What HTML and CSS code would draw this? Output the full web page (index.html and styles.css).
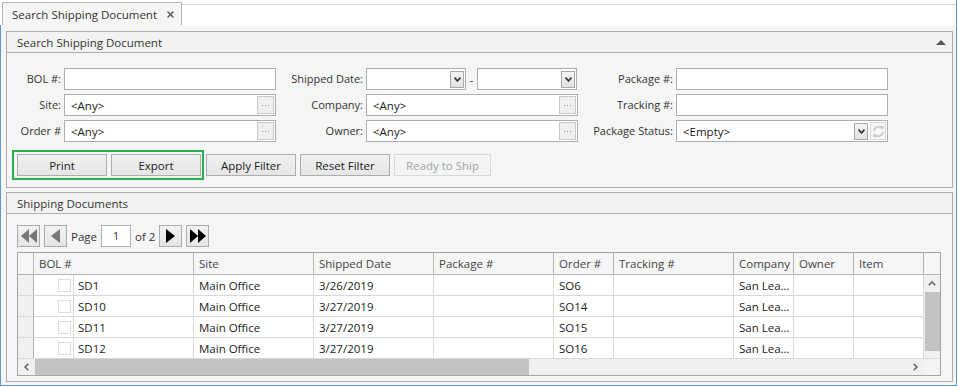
FILE: index.html
```html
<!DOCTYPE html>
<html>

<head>
    <title>Search Shipping Document</title>
    <meta name="viewport" content="width=device-width, initial-scale=1">
    <link rel="stylesheet" href="styles.css">
</head>

<body>
    <div class="window">
        <div class="tabstrip">
            <div class="tab">
                <span>Search Shipping Document</span>
                <svg class="tab-close" width="7" height="7" viewBox="0 0 7 7"><path d="M0.5 0.5 L6.5 6.5 M6.5 0.5 L0.5 6.5" stroke="#555" stroke-width="1.4"/></svg>
            </div>
            <div class="tab-fill"></div>
        </div>

        <div class="frame">
            <!-- search panel -->
            <section class="panel panel-search">
                <div class="panel-head">
                    <span>Search Shipping Document</span>
                    <svg width="10" height="5" viewBox="0 0 10 5"><polygon points="0,5 5,0 10,5" fill="#555"/></svg>
                </div>
                <div class="panel-body">
                    <div class="filters">
                        <div class="label">BOL #:</div>
                        <div class="input"></div>
                        <div class="label">Shipped Date:</div>
                        <div class="date-range">
                            <div class="input combo">
                                <span class="value"></span>
                                <span class="btn-drop"><svg width="7" height="5" viewBox="0 0 7 5"><path d="M0.6 0.6 L3.5 4 L6.4 0.6" fill="none" stroke="#333" stroke-width="1.6"/></svg></span>
                            </div>
                            <span class="dash">-</span>
                            <div class="input combo">
                                <span class="value"></span>
                                <span class="btn-drop"><svg width="7" height="5" viewBox="0 0 7 5"><path d="M0.6 0.6 L3.5 4 L6.4 0.6" fill="none" stroke="#333" stroke-width="1.6"/></svg></span>
                            </div>
                        </div>
                        <div class="label">Package #:</div>
                        <div class="input"></div>

                        <div class="label">Site:</div>
                        <div class="input lookup"><span class="value">&lt;Any&gt;</span><span class="btn-dots"><i></i><i></i><i></i></span></div>
                        <div class="label">Company:</div>
                        <div class="input lookup"><span class="value">&lt;Any&gt;</span><span class="btn-dots"><i></i><i></i><i></i></span></div>
                        <div class="label">Tracking #:</div>
                        <div class="input"></div>

                        <div class="label">Order #</div>
                        <div class="input lookup"><span class="value">&lt;Any&gt;</span><span class="btn-dots"><i></i><i></i><i></i></span></div>
                        <div class="label">Owner:</div>
                        <div class="input lookup"><span class="value">&lt;Any&gt;</span><span class="btn-dots"><i></i><i></i><i></i></span></div>
                        <div class="label">Package Status:</div>
                        <div class="input combo">
                            <span class="value">&lt;Empty&gt;</span>
                            <span class="btn-drop"><svg width="7" height="5" viewBox="0 0 7 5"><path d="M0.6 0.6 L3.5 4 L6.4 0.6" fill="none" stroke="#333" stroke-width="1.6"/></svg></span>
                            <span class="btn-refresh"><svg width="13" height="13" viewBox="0 0 13 13"><path d="M2 6 A4.5 4.5 0 0 1 10 3.5 M11 7 A4.5 4.5 0 0 1 3 9.5" fill="none" stroke="#c6c6c6" stroke-width="1.6"/><polygon points="8,1 11.5,1 11.5,4.8" fill="#c6c6c6"/><polygon points="5,12 1.5,12 1.5,8.2" fill="#c6c6c6"/></svg></span>
                        </div>
                    </div>

                    <div class="actions">
                        <div class="highlight">
                            <button class="btn">Print</button>
                            <button class="btn">Export</button>
                        </div>
                        <button class="btn">Apply Filter</button>
                        <button class="btn">Reset Filter</button>
                        <button class="btn btn-wide" disabled>Ready to Ship</button>
                    </div>
                </div>
            </section>

            <!-- results panel -->
            <section class="panel panel-results">
                <div class="panel-head">
                    <span>Shipping Documents</span>
                </div>
                <div class="panel-body">
                    <div class="pager">
                        <span class="pg-btn"><svg width="16" height="14" viewBox="0 0 16 14"><polygon points="8,0 8,14 0,7" fill="#777"/><polygon points="16,0 16,14 8,7" fill="#777"/></svg></span>
                        <span class="pg-btn"><svg width="9" height="14" viewBox="0 0 9 14"><polygon points="9,0 9,14 0,7" fill="#777"/></svg></span>
                        <span class="pg-text">Page</span>
                        <span class="pg-input">1</span>
                        <span class="pg-text">of 2</span>
                        <span class="pg-btn"><svg width="9" height="14" viewBox="0 0 9 14"><polygon points="0,0 0,14 9,7" fill="#000"/></svg></span>
                        <span class="pg-btn"><svg width="16" height="14" viewBox="0 0 16 14"><polygon points="0,0 0,14 8,7" fill="#000"/><polygon points="8,0 8,14 16,7" fill="#000"/></svg></span>
                    </div>

                    <div class="grid">
                        <div class="grid-row grid-head">
                            <div class="cell ind"></div>
                            <div class="cell">BOL #</div>
                            <div class="cell">Site</div>
                            <div class="cell">Shipped Date</div>
                            <div class="cell">Package #</div>
                            <div class="cell">Order #</div>
                            <div class="cell">Tracking #</div>
                            <div class="cell">Company</div>
                            <div class="cell">Owner</div>
                            <div class="cell">Item</div>
                            <div class="cell corner"></div>
                        </div>
                        <div class="grid-mid">
                            <div class="rows">
                                <div class="grid-row">
                                    <div class="cell ind"></div>
                                    <div class="cell bol"><span class="check"></span><span class="bol-text">SD1</span></div>
                                    <div class="cell">Main Office</div>
                                    <div class="cell">3/26/2019</div>
                                    <div class="cell"></div>
                                    <div class="cell">SO6</div>
                                    <div class="cell"></div>
                                    <div class="cell">San Lea…</div>
                                    <div class="cell"></div>
                                    <div class="cell"></div>
                                </div>
                                <div class="grid-row">
                                    <div class="cell ind"></div>
                                    <div class="cell bol"><span class="check"></span><span class="bol-text">SD10</span></div>
                                    <div class="cell">Main Office</div>
                                    <div class="cell">3/27/2019</div>
                                    <div class="cell"></div>
                                    <div class="cell">SO14</div>
                                    <div class="cell"></div>
                                    <div class="cell">San Lea…</div>
                                    <div class="cell"></div>
                                    <div class="cell"></div>
                                </div>
                                <div class="grid-row">
                                    <div class="cell ind"></div>
                                    <div class="cell bol"><span class="check"></span><span class="bol-text">SD11</span></div>
                                    <div class="cell">Main Office</div>
                                    <div class="cell">3/27/2019</div>
                                    <div class="cell"></div>
                                    <div class="cell">SO15</div>
                                    <div class="cell"></div>
                                    <div class="cell">San Lea…</div>
                                    <div class="cell"></div>
                                    <div class="cell"></div>
                                </div>
                                <div class="grid-row">
                                    <div class="cell ind"></div>
                                    <div class="cell bol"><span class="check"></span><span class="bol-text">SD12</span></div>
                                    <div class="cell">Main Office</div>
                                    <div class="cell">3/27/2019</div>
                                    <div class="cell"></div>
                                    <div class="cell">SO16</div>
                                    <div class="cell"></div>
                                    <div class="cell">San Lea…</div>
                                    <div class="cell"></div>
                                    <div class="cell"></div>
                                </div>
                            </div>
                            <div class="vscroll">
                                <span class="arrow"><svg width="8" height="5" viewBox="0 0 8 5"><path d="M0.7 4.3 L4 1 L7.3 4.3" fill="none" stroke="#606060" stroke-width="1.5"/></svg></span>
                                <span class="thumb"></span>
                            </div>
                        </div>
                        <div class="hscroll">
                            <div class="track">
                                <span class="arrow"><svg width="5" height="8" viewBox="0 0 5 8"><path d="M4.3 0.7 L1 4 L4.3 7.3" fill="none" stroke="#606060" stroke-width="1.5"/></svg></span>
                                <span class="thumb"></span>
                                <span class="arrow arrow-end"><svg width="5" height="8" viewBox="0 0 5 8"><path d="M0.7 0.7 L4 4 L0.7 7.3" fill="none" stroke="#606060" stroke-width="1.5"/></svg></span>
                            </div>
                            <div class="corner"></div>
                        </div>
                    </div>
                </div>
            </section>
        </div>
    </div>
</body>

</html>
```

FILE: styles.css
```css
:root {
    --frame-blue: #5b9bd5;
    --bg: #f5f5f5;
    --head-bg: #f2f2f2;
    --panel-border: #acacac;
    --input-border: #abadb3;
    --text: #333333;
    --grid-line: #d9d9d9;
    --grid-head-line: #b4b4b4;
    --scroll-bg: #f0f0f0;
    --scroll-thumb: #c2c2c2;
    --green: #26b04b;
}

* {
    box-sizing: border-box;
}

body {
    margin: 0;
    background-color: #ffffff;
    color: var(--text);
    font-family: "Open Sans", "Noto Sans", sans-serif;
    font-size: 11px;
}

.window {
    width: 957px;
    height: 386px;
    border-right: 1px solid var(--frame-blue);
    display: flex;
    flex-direction: column;
}

/* tab strip */
.tabstrip {
    height: 25px;
    display: flex;
    align-items: flex-end;
    flex-shrink: 0;
}

.tab {
    margin-left: 2px;
    height: 23px;
    width: 180px;
    display: flex;
    align-items: center;
    padding-left: 9px;
    border: 1px solid #b4b4b4;
    border-bottom: none;
    background-color: var(--bg);
    font-size: 11.5px;
}

.tab-close {
    margin-left: 10px;
}

.tab-fill {
    flex-grow: 1;
    align-self: stretch;
    margin-top: 4px;
    border-top: 1px solid #d6d6d6;
}

.frame {
    flex-grow: 1;
    background-color: var(--bg);
    border-left: 1px solid var(--frame-blue);
    border-bottom: 1px solid var(--frame-blue);
    padding: 6px 3px 3px 5px;
    display: flex;
    flex-direction: column;
    gap: 4px;
}

/* panels */
.panel {
    width: 947px;
    border: 1px solid var(--panel-border);
    background-color: var(--bg);
}

.panel-search {
    height: 157px;
}

.panel-results {
    height: 190px;
}

.panel-head {
    height: 21px;
    display: flex;
    align-items: center;
    justify-content: space-between;
    padding: 0 6px 0 10px;
    background-color: var(--head-bg);
    border-bottom: 1px solid var(--panel-border);
    font-size: 11.5px;
}

.panel-search .panel-body {
    padding: 15px 0 0 3px;
}

.filters {
    display: grid;
    grid-template-columns: 54px 212px 90px 212px 98px 212px;
    grid-auto-rows: 22px;
    row-gap: 4px;
}

.label {
    text-align: right;
    padding-right: 3px;
    line-height: 22px;
    white-space: nowrap;
}

.input {
    height: 22px;
    border: 1px solid var(--input-border);
    background-color: #ffffff;
    display: flex;
    align-items: center;
}

.input .value {
    flex-grow: 1;
    padding-left: 6px;
    font-size: 11.5px;
    color: #222;
}

.date-range {
    display: flex;
    align-items: center;
}

.date-range .input {
    width: 100px;
}

.dash {
    width: 11px;
    text-align: center;
}

.btn-drop {
    width: 14px;
    height: 17px;
    margin-right: 1px;
    border: 1px solid #a8a8a8;
    background: linear-gradient(#f4f4f4, #e2e2e2);
    display: flex;
    align-items: center;
    justify-content: center;
}

.btn-dots {
    width: 17px;
    height: 18px;
    margin-right: 1px;
    border: 1px solid #c8c8c8;
    background-color: #efefef;
    display: flex;
    align-items: center;
    justify-content: center;
    gap: 2px;
}

.btn-dots i {
    width: 1px;
    height: 1px;
    background-color: #8a8a8a;
}

.btn-refresh {
    width: 16px;
    height: 18px;
    margin-left: 1px;
    margin-right: 1px;
    border: 1px solid #d8d8d8;
    background-color: #f6f6f6;
    display: flex;
    align-items: center;
    justify-content: center;
}

/* action buttons */
.actions {
    margin: 8px 0 0 2px;
    height: 30px;
    display: flex;
    align-items: center;
    gap: 4px;
}

.highlight {
    display: flex;
    gap: 4px;
    border: 2px solid var(--green);
    padding: 2px 1px 2px 3px;
    margin-right: -2px;
}

.btn {
    width: 90px;
    height: 22px;
    padding: 0;
    border: 1px solid #acacac;
    background: linear-gradient(#f0f0f0, #e5e5e5);
    color: #222;
    font-family: inherit;
    font-size: 11.5px;
}

.btn-wide {
    width: 97px;
}

.btn:disabled {
    background: #f4f4f4;
    border-color: #d9d9d9;
    color: #a2a2a2;
}

/* results */
.panel-results .panel-body {
    padding: 11px 11px 5px 10px;
}

.pager {
    height: 22px;
    display: flex;
    align-items: center;
    gap: 4px;
}

.pg-btn {
    width: 23px;
    height: 22px;
    border: 1px solid #acacac;
    background: linear-gradient(#f2f2f2, #e4e4e4);
    display: flex;
    align-items: center;
    justify-content: center;
}

.pg-text {
    font-size: 11.5px;
}

.pg-input {
    width: 30px;
    height: 22px;
    border: 1px solid var(--input-border);
    background-color: #ffffff;
    text-align: center;
    line-height: 20px;
    font-size: 11.5px;
}

.grid {
    margin-top: 5px;
    width: 924px;
    height: 124px;
    border: 1px solid #a4a4a4;
    background-color: #ffffff;
    display: flex;
    flex-direction: column;
}

.grid-row {
    display: grid;
    grid-template-columns: 16px 160px 120px 120px 120px 60px 120px 60px 60px 70px;
    height: 21px;
    border-bottom: 1px solid var(--grid-line);
    flex-shrink: 0;
}

.grid-head {
    grid-template-columns: 16px 160px 120px 120px 120px 60px 120px 60px 60px 70px 16px;
    height: 22px;
    background-color: var(--bg);
    border-bottom: 1px solid var(--grid-head-line);
}

.cell {
    border-right: 1px solid var(--grid-line);
    padding-left: 5px;
    display: flex;
    align-items: center;
    white-space: nowrap;
    overflow: hidden;
    font-size: 11.5px;
    color: #222;
}

.grid-head .cell {
    border-right-color: var(--grid-head-line);
    color: #444;
}

.grid-head .corner {
    border-right: none;
}

.cell.ind {
    background-color: var(--scroll-bg);
    border-right-color: var(--grid-head-line);
}

.grid-head .cell.ind {
    background-color: var(--bg);
}

.cell.bol {
    padding-left: 24px;
}

.check {
    width: 13px;
    height: 13px;
    border: 1px solid #dcdcdc;
    flex-shrink: 0;
}

.bol-text {
    align-self: stretch;
    display: flex;
    align-items: center;
    margin-left: 2px;
    padding-left: 4px;
    border-left: 1px solid var(--grid-line);
}

.grid-mid {
    height: 83px;
    display: flex;
}

.rows {
    width: 906px;
    overflow: hidden;
}

.vscroll {
    width: 16px;
    background-color: var(--scroll-bg);
    display: flex;
    flex-direction: column;
    align-items: center;
}

.vscroll .arrow {
    height: 17px;
    display: flex;
    align-items: center;
}

.vscroll .thumb {
    width: 15px;
    height: 59px;
    background-color: var(--scroll-thumb);
}

.hscroll {
    height: 17px;
    border-top: 1px solid var(--grid-line);
    display: flex;
}

.hscroll .track {
    width: 906px;
    background-color: var(--scroll-bg);
    display: flex;
    align-items: stretch;
}

.hscroll .arrow {
    width: 16px;
    display: flex;
    align-items: center;
    justify-content: center;
}

.hscroll .arrow-end {
    margin-left: auto;
    margin-right: 1px;
}

.hscroll .thumb {
    margin-left: 1px;
    width: 494px;
    background-color: var(--scroll-thumb);
}

.hscroll .corner {
    width: 16px;
    background-color: #f3f3f3;
}
```
